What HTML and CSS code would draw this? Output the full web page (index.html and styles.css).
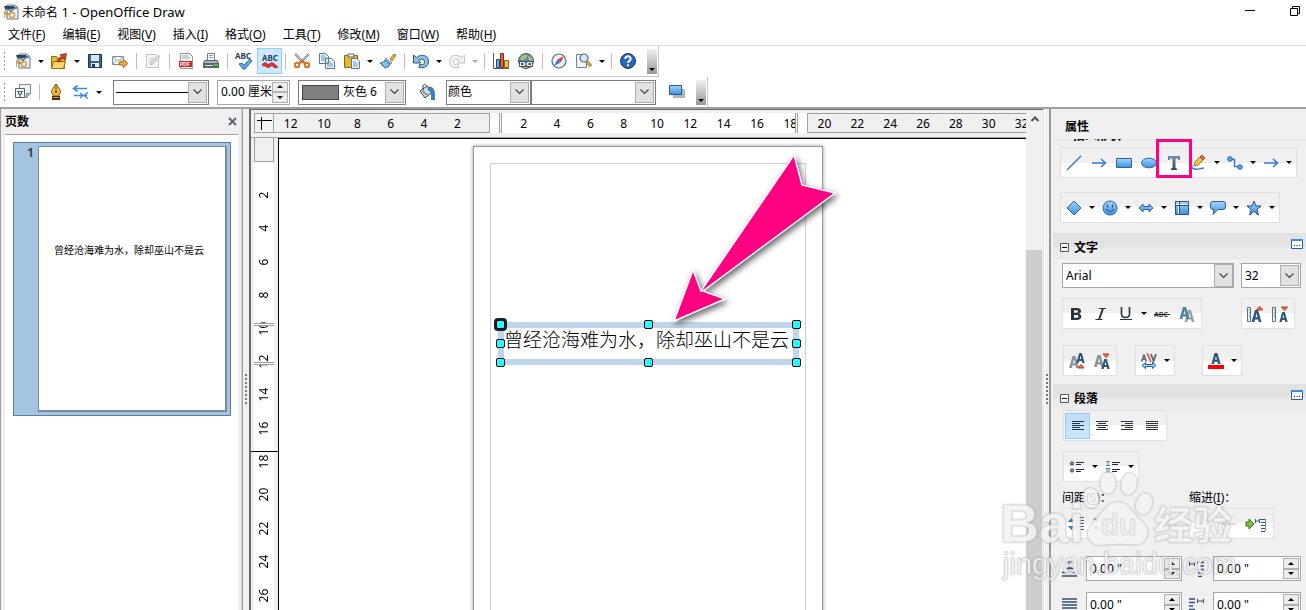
FILE: index.html
```html
<!DOCTYPE html>
<html lang="zh-CN">
<head>
<meta charset="utf-8">
<title>未命名 1 - OpenOffice Draw</title>
<link rel="stylesheet" href="styles.css">
</head>
<body>
<svg class="defs" aria-hidden="true">
  <defs>
    <linearGradient id="blue" x1="0" y1="0" x2="0" y2="1"><stop offset="0" stop-color="#a6d6f8"/><stop offset="1" stop-color="#3a8fe0"/></linearGradient>
    <linearGradient id="steel" x1="0" y1="0" x2="0" y2="1"><stop offset="0" stop-color="#6d8fa8"/><stop offset="1" stop-color="#274862"/></linearGradient>
    <symbol id="new" viewBox="0 0 16 16"><path d="M4 1h8l3 3v11H4z" fill="#e9f1f6" stroke="#5d7890"/><path d="M1 2h10l2 2-4 1-7 0z" fill="#27455e"/><path d="M2 6c3-2 5 0 6 2 1-3 3-4 6-4M2 10c2-1 4 0 5 1" fill="none" stroke="#5b7e9b" stroke-width="1.4"/><path d="M1 7h3v3H2v4H1z" fill="#e8a33a"/><circle cx="9" cy="11" r="2.6" fill="none" stroke="#e2a13b" stroke-width="1.5"/></symbol>
    <symbol id="open" viewBox="0 0 16 16"><path d="M.5 3.500h5l1 2h7v10H.5z" fill="#e8b530" stroke="#976a10"/><path d="M.5 15.500l2-7h12l-2 7z" fill="#ffd964" stroke="#976a10"/><path d="M6.500 9c0-4 2-5 4-5L9 1.500l6.500-1L14.500 7l-1.800-1.500C10 5.500 9 7 9 9z" fill="#c8442a" stroke="#7d2010" stroke-width=".6"/></symbol>
    <symbol id="save" viewBox="0 0 16 16"><path d="M1.500 1.500h13v13h-13z" fill="#33668c" stroke="#183a57"/><path d="M4 2h8v6H4z" fill="#d8e9f3"/><path d="M4 10h8v4H4z" fill="#e8eef2"/><path d="M5 11h3v3H5z" fill="#183a57"/></symbol>
    <symbol id="mail" viewBox="0 0 16 16"><path d="M.5 3.500h11v8H.5z" fill="#f3f7fa" stroke="#7b8b98"/><path d="M1 4l5 4 5-4M1 11l3-4M11 11L8 7" fill="none" stroke="#7b8b98" stroke-width=".8"/><path d="M7 9h4V6.500l5 4-5 4V12H7z" fill="#f4a83c" stroke="#9c5a0c" stroke-width=".8"/></symbol>
    <symbol id="edit" viewBox="0 0 16 16"><path d="M1.500 1.500h10l2 2v11h-12z" fill="#f6f6f6" stroke="#c4c4c4"/><path d="M4 5h6M4 7h4M4 9h3" stroke="#d0d0d0"/><path d="M5 12l1-3 7-7 2 2-7 7z" fill="#dcdcdc" stroke="#b8b8b8" stroke-width=".8"/></symbol>
    <symbol id="pdf" viewBox="0 0 16 16"><path d="M2.500.5h9l3 3v12h-12z" fill="#f4f7f9" stroke="#8899a5"/><path d="M4 3h6M4 5h8" stroke="#9aa9b4"/><path d="M1 8h13v6H1z" fill="#d92525"/><text x="2" y="13" font-family="Liberation Sans" font-size="5" font-weight="bold" fill="#fff">PDF</text></symbol>
    <symbol id="print" viewBox="0 0 16 16"><path d="M4.500.5h7v7h-7z" fill="#f4f7f9" stroke="#6f8291"/><path d="M6 2.500h4M6 4.500h4" stroke="#7fa2bd"/><path d="M1.500 7h13L16 10v5H0v-5z" fill="#59636c"/><path d="M2 8h12l1 2H1z" fill="#aab4bc"/><path d="M2 12.500h8" stroke="#dfe4e8"/><path d="M11 11h4v2h-4z" fill="#59c23c"/></symbol>
    <symbol id="spell" viewBox="0 0 18 18"><text x="0" y="7" font-family="Noto Sans" font-size="8" font-weight="bold" fill="#23405c">ABC</text><path d="M4 12l3-1 2 2 6-6 2 2-7 8H8z" fill="#5aa7e8" stroke="#1f5c9c" stroke-width=".8"/></symbol>
    <symbol id="auto" viewBox="0 0 18 18"><text x="1" y="9" font-family="Noto Sans" font-size="8" font-weight="bold" fill="#23405c">ABC</text><path d="M2 14q1.750-3.500 3.500-1t3.500 0 3.500 0 3.500 1" fill="none" stroke="#a31414" stroke-width="3.200"/><path d="M2 14q1.750-3.500 3.500-1t3.500 0 3.500 0 3.500 1" fill="none" stroke="#e8392e" stroke-width="1.800"/></symbol>
    <symbol id="cut" viewBox="0 0 16 16"><path d="M1 1l9 9M15 1l-9 9" stroke="#6d7f8e" stroke-width="2.200"/><path d="M1 1l9 9M15 1l-9 9" stroke="#dbe4ea" stroke-width=".8"/><ellipse cx="3" cy="12" rx="2.300" ry="2.300" fill="#fff" stroke="#d9731c" stroke-width="2"/><ellipse cx="13" cy="12" rx="2.300" ry="2.300" fill="#fff" stroke="#d9731c" stroke-width="2"/><path d="M5 10l3-2 3 2" fill="none" stroke="#d9731c" stroke-width="2.200"/></symbol>
    <symbol id="copy" viewBox="0 0 16 16"><path d="M.5.5h6l3 3v7h-9zM6.500 5.500h6l3 3v7h-9z" fill="#eaf3fa" stroke="#60788c"/><path d="M2 3h4M2 5h6M2 7h4M8 9h4M8 11h6M8 13h6" stroke="#5b9bd0"/></symbol>
    <symbol id="paste" viewBox="0 0 16 16"><path d="M.5 2.500h13v12H.5z" fill="#e8b530" stroke="#8b6313"/><path d="M4 1h6v3H4z" fill="#eaeff2" stroke="#5f6d78"/><path d="M7.500 5.500h5l3 3v7h-8z" fill="#eef5fa" stroke="#60788c"/><path d="M9 9h3M9 11h5M9 13h5" stroke="#5b9bd0"/></symbol>
    <symbol id="brush" viewBox="0 0 16 16"><path d="M10 6l4-5 2 1-4 6z" fill="#f2b640" stroke="#8d5d10" stroke-width=".8"/><path d="M6 5l6 5-2 1-5-4z" fill="#c9d3da" stroke="#60717e" stroke-width=".8"/><path d="M5 7l5 4c-1 3-3 4-5 4L0 10c2 0 4-1 5-3z" fill="#64aeec" stroke="#205c98" stroke-width=".8"/><path d="M3 10l4 3M5 9l3 3" stroke="#c4e3fa" stroke-width=".8"/></symbol>
    <symbol id="undo" viewBox="0 0 16 16"><path d="M.5 2v8H8L5.800 7.500C9 5 11.500 6.500 11.500 9s-2 3-5 2.500l-.5 3c6 1 9.500-1.500 9.500-6C15.500 2 8.500.5 3.500 4.500z" fill="#8fc0e2" stroke="#2a5b84"/></symbol>
    <symbol id="redo" viewBox="0 0 16 16"><path d="M15.500 2v8H8l2.200-2.500C7 5 4.500 6.500 4.500 9s2 3 5 2.500l.5 3C4 15.500.5 13 .5 8.500.5 2 7.500.5 12.500 4.500z" fill="#f2f2f2" stroke="#c4c4c4"/></symbol>
    <symbol id="chart" viewBox="0 0 16 16"><path d="M.5 0v15.500H16" fill="none" stroke="#4a5a68"/><path d="M3.500 6.500h3v8h-3z" fill="#6ab0e6" stroke="#1c4f80"/><path d="M7.500.5h3v14h-3z" fill="#e0663a" stroke="#862c10"/><path d="M11.500 7.500h4v7h-4z" fill="#f6c344" stroke="#8b6313"/></symbol>
    <symbol id="globe" viewBox="0 0 16 16"><circle cx="8" cy="8" r="7.500" fill="#4e93cf" stroke="#3b5b74"/><path d="M2 6c1-4 5-5 7-4l-1 3-3 2zM10 3l4 2 1 4-4-2zM5 13h5l-1 2H6z" fill="#c6c144"/><path d="M2.500 9.500h4v3h-4zM9.500 9.500h4v3h-4zM5 11h6" fill="none" stroke="#3b4b58" stroke-width="2.800"/><path d="M2.500 9.500h4v3h-4zM9.500 9.500h4v3h-4zM5 11h6" fill="none" stroke="#e6ebee" stroke-width="1.200"/></symbol>
    <symbol id="nav" viewBox="0 0 16 16"><circle cx="8" cy="8" r="7" fill="#e5f2fb" stroke="#526b80" stroke-width="1.200"/><path d="M13 3L9.500 9.500l-3-3z" fill="#e23b2e"/><path d="M3 13l3.500-6.500 3 3z" fill="#3576c6"/></symbol>
    <symbol id="zoom" viewBox="0 0 16 16"><path d="M.5 1.500h10v13H.5z" fill="#f4f7f9" stroke="#72869a"/><path d="M10 8l5 5" stroke="#8b5a10" stroke-width="3"/><path d="M10 8l5 5" stroke="#f2b640" stroke-width="1.500"/><circle cx="8" cy="5" r="4" fill="#cfe6f8" fill-opacity=".9" stroke="#5d7184" stroke-width="1.200"/></symbol>
    <symbol id="help" viewBox="0 0 16 16"><circle cx="8" cy="8" r="7.500" fill="#2964b8" stroke="#173c74"/><path d="M5.300 6C5.300 2.500 10.700 2.500 10.700 5.800 10.700 8 8 7.700 8 10" fill="none" stroke="#fff" stroke-width="2"/><path d="M7 11.300h2v2H7z" fill="#fff"/></symbol>
    <symbol id="styles" viewBox="0 0 16 16"><path d="M4.500.5h11v9l-4 4h-7z" fill="#eef2f5" stroke="#7b8b98"/><path d="M15.500 9.500h-4v4z" fill="#a8c8e0" stroke="#7b8b98"/><path d="M.5 4.500h9v9h-9z" fill="#fff" stroke="#4f6577"/><path d="M2 7.500h6M3.500 8v2h3V8M5 10v3" fill="none" stroke="#4f6577" stroke-width="1.200"/></symbol>
    <symbol id="pen" viewBox="0 0 16 16"><path d="M8 0c2 3 4.500 6 4.500 8l-2 4h-5l-2-4c0-2 2.500-5 4.500-8z" fill="#f7bd3f" stroke="#7a5210"/><path d="M8 1v7" stroke="#7a5210"/><circle cx="8" cy="8" r="1" fill="#4b3008"/><path d="M4 12h8v4H4z" fill="#4a3317"/><path d="M5 13.500h6" stroke="#d59b35"/></symbol>
    <symbol id="arrows" viewBox="0 0 18 16"><path d="M2 4.500h13M5.500 1.500l-4 3 4 3" fill="none" stroke="#3d8be0" stroke-width="1.600"/><path d="M2 11.500h13M8 9l3 2.500L8 14M16 8.500l-4 3 4 3" fill="none" stroke="#3d8be0" stroke-width="1.300"/></symbol>
    <symbol id="bucket" viewBox="0 0 16 16"><path d="M1 7l7-5 5 6-7 6z" fill="#d5dde2" stroke="#33444f"/><path d="M3.500 7l6 5" stroke="#8494a0" stroke-width="2"/><path d="M4 6V2c0-2 4-2 4 1" fill="none" stroke="#33444f"/><path d="M10 3c5 0 6 4 5.500 13h-3c0-6 .5-9-3.500-10z" fill="#3a83c8" stroke="#1d4f82" stroke-width=".6"/></symbol>
    <symbol id="shadow" viewBox="0 0 16 16"><path d="M4 5h12v9H4z" fill="#b3b3b3"/><path d="M.5 1.500h12v9H.5z" fill="url(#blue)" stroke="#2358a5"/></symbol>
    <symbol id="line" viewBox="0 0 16 16"><path d="M1 15L15 1" stroke="#2f7bd0" stroke-width="1.400"/></symbol>
    <symbol id="arrow" viewBox="0 0 16 16"><path d="M1 8h13M10 4l4.500 4L10 12" fill="none" stroke="#2f7bd0" stroke-width="1.500"/></symbol>
    <symbol id="rect" viewBox="0 0 16 16"><path d="M0.500 3.500h15v9h-15z" fill="url(#blue)" stroke="#2a62ad"/></symbol>
    <symbol id="ellipse" viewBox="0 0 16 16"><ellipse cx="8" cy="8" rx="7.500" ry="4.800" fill="url(#blue)" stroke="#2a62ad"/></symbol>
    <symbol id="text" viewBox="0 0 16 16"><path d="M2 1h12v4h-1.500L12 3.500H9.500v9.500l1.500.5V15H5v-1.500l1.500-.5V3.500H4L3.500 5H2z" fill="url(#steel)"/></symbol>
    <symbol id="pencil" viewBox="0 0 16 16"><path d="M1 10c-1 3 1 4 3 4 3 1 6-1 9-1" fill="none" stroke="#2f7bd0" stroke-width="1.500"/><path d="M3 11l1-4 6-6 3 3-6 6z" fill="#f7c23f" stroke="#8b6313" stroke-width=".8"/><path d="M9 2l2-2 3 3-2 2z" fill="#e06a5c" stroke="#8c2c20" stroke-width=".6"/></symbol>
    <symbol id="connector" viewBox="0 0 16 16"><path d="M4 4.500h3.500v7H13" fill="none" stroke="#2f7bd0" stroke-width="1.500"/><circle cx="3" cy="4" r="2.300" fill="#5aaaf0" stroke="#2a62ad"/><circle cx="13" cy="12" r="2.300" fill="#5aaaf0" stroke="#2a62ad"/></symbol>
    <symbol id="diamond" viewBox="0 0 16 16"><path d="M8 1l7 7-7 7-7-7z" fill="url(#blue)" stroke="#2a62ad"/></symbol>
    <symbol id="smile" viewBox="0 0 16 16"><circle cx="8" cy="8" r="7" fill="url(#blue)" stroke="#2a62ad"/><path d="M5.500 4.500v3M10.500 4.500v3M4 9q4 5 8 0" fill="none" stroke="#1d4f92" stroke-width="1.100"/></symbol>
    <symbol id="dblarrow" viewBox="0 0 16 16"><path d="M1 8l4-4v2.500h6V4l4 4-4 4V9.500H5V12z" fill="url(#blue)" stroke="#2a62ad"/></symbol>
    <symbol id="flow" viewBox="0 0 16 16"><path d="M1.500 1.500h13v13h-13z" fill="url(#blue)" stroke="#23529a"/><path d="M4.500 2v12M2 4.500h12" stroke="#fff"/><path d="M5.500 2v12M2 5.500h12" stroke="#23529a"/></symbol>
    <symbol id="callout" viewBox="0 0 16 16"><path d="M3 1.500h10q2.500 0 2.500 2.500v3q0 2.500-2.500 2.500H8L3 14.500 4 9.500H3Q.5 9.500.5 7V4Q.5 1.500 3 1.500z" fill="url(#blue)" stroke="#2a62ad"/></symbol>
    <symbol id="star" viewBox="0 0 16 16"><path d="M8 1l2 5h5l-4 3.500L12.500 15 8 11.500 3.500 15 5 9.500 1 6h5z" fill="url(#blue)" stroke="#23529a"/></symbol>
    <symbol id="bold" viewBox="0 0 16 16"><path d="M3 2h6c5 0 5 5 2 5.700C15 9 13.500 14 9 14H3zm3 2.200v2.500h2.500c2 0 2-2.500 0-2.500zm0 4.700v2.900h3c2 0 2-2.900 0-2.900z" fill="#29323f" fill-rule="evenodd"/></symbol>
    <symbol id="italic" viewBox="0 0 16 16"><path d="M6 2.500h7M2.500 13.500h7" stroke="#29323f" stroke-width="1.200"/><path d="M10 2.500L6 13.500" stroke="#29323f" stroke-width="2"/></symbol>
    <symbol id="underline" viewBox="0 0 16 16"><path d="M3.500 1v7q0 3.500 4 3.500t4-3.500V1" fill="none" stroke="#29323f" stroke-width="1.600"/><path d="M2 13.500h12" stroke="#29323f"/></symbol>
    <symbol id="strike" viewBox="0 0 16 16"><text x="0" y="11" font-family="Noto Sans" font-size="7" font-weight="bold" fill="#444">ABC</text><path d="M0 8.500h16" stroke="#222"/></symbol>
    <symbol id="a" viewBox="0 0 10 12"><path d="M0 12L3.500 0h3L10 12H7.200L6.600 9.500H3.400L2.800 12zM4 7.300h2L5 3z" fill-rule="evenodd"/></symbol>
    <symbol id="shadowA" viewBox="0 0 16 16"><use href="#a" x="5" y="4" width="11" height="12" fill="#9aa0a5"/><use href="#a" x="0" y="1" width="11" height="12" fill="#4681a8"/></symbol>
    <symbol id="grow" viewBox="0 0 16 16"><path d="M.5 1.500h3v14h-3zM2 4h2M2 7h2M2 10h2" fill="#e8f0f5" stroke="#56748a"/><use href="#a" x="4" y="4" width="11" height="12" fill="#2b567a"/><path d="M9.500 4L12.500.5 15.500 4z" fill="#f47b3a" stroke="#b73514"/></symbol>
    <symbol id="shrink" viewBox="0 0 16 16"><path d="M.5 1.500h3v14h-3zM2 4h2M2 7h2M2 10h2" fill="#e8f0f5" stroke="#56748a"/><use href="#a" x="7" y="6" width="9" height="10" fill="#2b567a"/><path d="M9.500 1L12.500 4.500 15.500 1z" fill="#f47b3a" stroke="#b73514"/></symbol>
    <symbol id="sup" viewBox="0 0 16 16"><use href="#a" x="0" y="3" width="10" height="12" fill="#8b9299"/><use href="#a" x="7" y="0" width="9" height="10" fill="#2b567a"/><path d="M9 15L12 11.500l3 3.500z" fill="#f47b3a" stroke="#b73514"/></symbol>
    <symbol id="sub" viewBox="0 0 16 16"><use href="#a" x="0" y="2" width="10" height="12" fill="#8b9299"/><use href="#a" x="7" y="6" width="9" height="10" fill="#2b567a"/><path d="M9 1L12 4.500l3-3.500z" fill="#f47b3a" stroke="#b73514"/></symbol>
    <symbol id="spacing" viewBox="0 0 16 16"><use href="#a" x="0" y="1" width="6" height="8" fill="#5a6570"/><path d="M10 1l2.500 7L15 1" fill="none" stroke="#5a6570" stroke-width="1.800"/><path d="M6 0l4 9" stroke="#e03030" stroke-width="1.300"/><path d="M1 12.500l3.500-3v2h7v-2l3.500 3-3.500 3v-2h-7v2z" fill="#9fd0f5" stroke="#225f9c"/></symbol>
    <symbol id="color" viewBox="0 0 16 16"><use href="#a" x="2" y="0" width="12" height="11" fill="#2b567a"/><path d="M0 12h16v4H0z" fill="#f00"/></symbol>
    <symbol id="left" viewBox="0 0 16 16"><path d="M2 3.500h12M2 5.500h8M2 7.500h12M2 9.500h8M2 11.500h12" stroke="#2c3440"/></symbol>
    <symbol id="center" viewBox="0 0 16 16"><path d="M2 3.500h12M4 5.500h8M2 7.500h12M4 9.500h8M2 11.500h12" stroke="#2c3440"/></symbol>
    <symbol id="right" viewBox="0 0 16 16"><path d="M2 3.500h12M6 5.500h8M2 7.500h12M6 9.500h8M2 11.500h12" stroke="#2c3440"/></symbol>
    <symbol id="justify" viewBox="0 0 16 16"><path d="M2 3.500h12M2 5.500h12M2 7.500h12M2 9.500h12M2 11.500h12" stroke="#2c3440"/></symbol>
    <symbol id="bullets" viewBox="0 0 16 16"><path d="M7 3.500h8M7 5.500h5M7 10.500h8M7 12.500h5" stroke="#222b36"/><circle cx="3" cy="4.500" r="1.600" fill="#6da4cc" stroke="#24435e"/><circle cx="3" cy="11.500" r="1.600" fill="#6da4cc" stroke="#24435e"/></symbol>
    <symbol id="numbers" viewBox="0 0 16 16"><path d="M7 3.500h8M7 5.500h6M7 10.500h8M7 12.500h5" stroke="#222b36"/><path d="M1 2.500h4M3 2.500v4M1 6.500h4M.5 9.500h5M2 9.500v4M4 9.500v4M.5 13.500h5" stroke="#5d87a3"/></symbol>
    <symbol id="inc" viewBox="0 0 16 16"><path d="M8 1.500h8M8 4.500h8M8 7.500h8M8 10.500h8M8 13.500h8" stroke="#59636d"/><path d="M0 6l3.500-4L7 6zM0 10l3.500 4L7 10z" fill="#3c74a6"/></symbol>
    <symbol id="dec" viewBox="0 0 16 16"><path d="M8 2.500h8M8 5.500h8M8 8.500h8M8 11.500h8M8 14.500h8" stroke="#414b55"/><path d="M0 2.500h7L3.500 6zM0 13h7L3.500 9.500z" fill="#3c74a6"/></symbol>
    <symbol id="outdent" viewBox="0 0 16 16"><path d="M16 8H3M7 4L3 8l4 4" fill="none" stroke="#b4b8bb"/></symbol>
    <symbol id="hang" viewBox="0 0 22 16"><path d="M1 6h3V3l5 5-5 5v-3H1z" fill="#7ec53c" stroke="#36751a"/><path d="M10.500 3v4M11 5h3M14.500 3v4" stroke="#2f5d8d"/><path d="M14 3.500h7M16 6.500h4M16 9.500h4M16 12.500h4M16 15.500h4" stroke="#2f5d8d"/><path d="M20.500 3v12" stroke="#6f8fb0"/></symbol>
    <symbol id="above" viewBox="0 0 16 16"><path d="M4 1h6M7 1v6M4 7h6" stroke="#47627f"/><path d="M3 7.500h8M0 11.500h15M0 15h15" stroke="#304e73" stroke-width="1.500"/></symbol>
    <symbol id="before" viewBox="0 0 16 16"><path d="M.5 1v4M0 3h5M5.500 1v4" stroke="#304e73"/><path d="M8 1.500h7M11 5h4M9 8.500h6M9 12h6M9 15.500h4" stroke="#304e73" stroke-width="1.300"/></symbol>
    <symbol id="below" viewBox="0 0 16 16"><path d="M0 2h15M0 5h15M0 8h15M0 11h15M5 14h6" stroke="#304e73" stroke-width="1.600"/></symbol>
    <symbol id="after" viewBox="0 0 16 16"><path d="M0 2h6M0 5.500h6M0 9h4M0 12.500h6" stroke="#304e73" stroke-width="1.300"/><path d="M8.500 2v4M9 4h5M14.500 2v4" stroke="#304e73"/></symbol>
    <symbol id="more" viewBox="0 0 12 12"><path d="M.5 1.500h11v9H.5z" fill="#fff" stroke="#2a5cb0"/><path d="M0 2h12" stroke="#3f86e8" stroke-width="2"/><path d="M3 7.500h1M5.500 7.500h1M8 7.500h1" stroke="#111"/></symbol>
    <symbol id="minus" viewBox="0 0 10 10"><path d="M.5.5h8v8h-8z" fill="#fff" stroke="#43596e"/><path d="M2 4.500h5" stroke="#111"/></symbol>
  </defs>
</svg>

<header class="titlebar">
  <svg class="i"><use href="#new"/></svg>
  <h1><span>未命名</span> 1 - OpenOffice Draw</h1>
  <div class="winbtns">
    <button aria-label="最小化"><svg class="win" viewBox="0 0 12 12"><path d="M1 4.500h10" stroke="#000"/></svg></button>
    <button aria-label="还原"><svg class="win" viewBox="0 0 12 12"><path d="M1.500 2.500h7v7h-7zM3.500 2V.5h7v7H9" fill="none" stroke="#000"/></svg></button>
  </div>
</header>

<nav class="menubar">
  <button>文件(<u>F</u>)</button><button>编辑(<u>E</u>)</button><button>视图(<u>V</u>)</button><button>插入(<u>I</u>)</button><button>格式(<u>O</u>)</button><button>工具(<u>T</u>)</button><button>修改(<u>M</u>)</button><button>窗口(<u>W</u>)</button><button>帮助(<u>H</u>)</button>
</nav>

<div class="toolbar standard">
  <span class="grip"></span>
  <button class="tb" aria-label="新建"><svg class="i"><use href="#new"/></svg></button><button class="dd" aria-label="新建选项"></button>
  <button class="tb" aria-label="打开"><svg class="i"><use href="#open"/></svg></button><button class="dd" aria-label="打开选项"></button>
  <button class="tb" aria-label="保存"><svg class="i"><use href="#save"/></svg></button>
  <button class="tb" aria-label="邮件"><svg class="i"><use href="#mail"/></svg></button>
  <span class="sep"></span>
  <button class="tb" aria-label="编辑文件"><svg class="i"><use href="#edit"/></svg></button>
  <span class="sep"></span>
  <button class="tb" aria-label="导出 PDF"><svg class="i"><use href="#pdf"/></svg></button>
  <button class="tb" aria-label="打印"><svg class="i"><use href="#print"/></svg></button>
  <span class="sep"></span>
  <button class="tb" aria-label="拼写检查"><svg class="i wide"><use href="#spell"/></svg></button>
  <button class="tb on" aria-label="自动拼写检查"><svg class="i wide"><use href="#auto"/></svg></button>
  <span class="sep"></span>
  <button class="tb" aria-label="剪切"><svg class="i"><use href="#cut"/></svg></button>
  <button class="tb" aria-label="复制"><svg class="i"><use href="#copy"/></svg></button>
  <button class="tb" aria-label="粘贴"><svg class="i"><use href="#paste"/></svg></button><button class="dd" aria-label="粘贴选项"></button>
  <button class="tb" aria-label="格式刷"><svg class="i"><use href="#brush"/></svg></button>
  <span class="sep"></span>
  <button class="tb" aria-label="撤消"><svg class="i"><use href="#undo"/></svg></button><button class="dd" aria-label="撤消选项"></button>
  <button class="tb" aria-label="恢复"><svg class="i"><use href="#redo"/></svg></button><button class="dd off" aria-label="恢复选项"></button>
  <span class="sep"></span>
  <button class="tb" aria-label="图表"><svg class="i"><use href="#chart"/></svg></button>
  <button class="tb" aria-label="超链接"><svg class="i"><use href="#globe"/></svg></button>
  <span class="sep"></span>
  <button class="tb" aria-label="导航"><svg class="i"><use href="#nav"/></svg></button>
  <button class="tb" aria-label="显示比例"><svg class="i"><use href="#zoom"/></svg></button><button class="dd" aria-label="显示比例选项"></button>
  <span class="sep"></span>
  <button class="tb" aria-label="帮助"><svg class="i"><use href="#help"/></svg></button>
  <button class="tail" aria-label="工具栏选项"></button>
</div>

<div class="toolbar props">
  <span class="grip"></span>
  <button class="tb" aria-label="样式"><svg class="i"><use href="#styles"/></svg></button>
  <span class="sep"></span>
  <button class="tb" aria-label="线条"><svg class="i"><use href="#pen"/></svg></button>
  <button class="tb" aria-label="箭头样式"><svg class="i wide"><use href="#arrows"/></svg></button><button class="dd" aria-label="箭头选项"></button>
  <span class="combo line-style"><select aria-label="线条样式"><option></option></select></span>
  <span class="spin line-width"><input type="text" value="0.00 厘米" aria-label="线宽"><span class="steps"><button aria-label="增加"></button><button aria-label="减少"></button></span></span>
  <span class="combo line-color"><span class="swatch"></span><select aria-label="线条颜色"><option>灰色 6</option></select></span>
  <button class="tb" aria-label="填充"><svg class="i"><use href="#bucket"/></svg></button>
  <span class="combos"><span class="combo fill-type"><select aria-label="填充类型"><option>颜色</option></select></span><span class="combo fill-value"><select aria-label="填充颜色"><option></option></select></span></span>
  <button class="tb" aria-label="阴影"><svg class="i"><use href="#shadow"/></svg></button>
  <button class="tail" aria-label="工具栏选项"></button>
</div>

<main class="work">
  <aside class="pages">
    <div class="pages-head"><h2>页数</h2><button class="close" aria-label="关闭"><svg viewBox="0 0 10 10"><path d="M1 1l7 7M8 1L1 8" stroke="#5b6673" stroke-width="2"/></svg></button></div>
    <div class="pages-list">
      <div class="thumb"><b>1</b><div class="thumb-page">曾经沧海难为水，除却巫山不是云</div></div>
    </div>
  </aside>
  <div class="splitter left"><i class="dots"></i></div>

  <section class="doc">
    <div class="hrow">
      <button class="origin" aria-label="标尺原点"></button>
      <div class="hruler">
        <div class="seg before"><span>12</span><span>10</span><span>8</span><span>6</span><span>4</span><span>2</span></div>
        <div class="seg inside"><span>2</span><span>4</span><span>6</span><span>8</span><span>10</span><span>12</span><span>14</span><span>16</span><span>18</span><i class="mark start"></i><i class="mark end"></i></div>
        <div class="seg behind"><span>20</span><span>22</span><span>24</span><span>26</span><span>28</span><span>30</span><span>32</span></div>
      </div>
    </div>
    <div class="vrow">
      <div class="vruler">
        <div class="vcap"></div>
        <div class="vnums"><span>2</span><span>4</span><span>6</span><span>8</span><span>10</span><span>12</span><span>14</span><span>16</span><span>18</span><span>20</span><span>22</span><span>24</span><span>26</span></div>
        <i class="mark top"></i><i class="mark bottom"></i><i class="cursor"></i>
      </div>
      <div class="canvas">
        <div class="sheet"><div class="margins"></div></div>
        <div class="textbox">曾经沧海难为水，除却巫山不是云
          <i class="h first nw"></i><i class="h n"></i><i class="h ne"></i><i class="h w"></i><i class="h e"></i><i class="h sw"></i><i class="h s"></i><i class="h se"></i>
        </div>
        <svg class="pointer" viewBox="0 0 180 190"><path d="M135 17L143 47 176 55 44 153 66 161 15 183 34 132 42 153z" fill="#ff0080" stroke="#fff" stroke-width="1.500"/></svg>
      </div>
    </div>
  </section>
  <div class="scroll"><button aria-label="向上滚动"><svg viewBox="0 0 10 8"><path d="M1.500 6L5 2.500 8.500 6" fill="none" stroke="#505050" stroke-width="2"/></svg></button><span class="track"></span><span class="bar"></span></div>
  <div class="splitter right"><i class="dots"></i></div>

  <aside class="side">
    <h2>属性</h2>
    <div class="cropped"><span>插入形状</span></div>
    <div class="stack shapes">
      <div class="box">
        <button class="tb" aria-label="直线"><svg class="i"><use href="#line"/></svg></button><button class="tb" aria-label="箭头"><svg class="i"><use href="#arrow"/></svg></button><button class="tb" aria-label="矩形"><svg class="i"><use href="#rect"/></svg></button><button class="tb" aria-label="椭圆"><svg class="i"><use href="#ellipse"/></svg></button><button class="tb target" aria-label="文字"><svg class="i"><use href="#text"/></svg></button><button class="tb" aria-label="曲线"><svg class="i"><use href="#pencil"/></svg></button><button class="dd" aria-label="曲线选项"></button><button class="tb" aria-label="连接符"><svg class="i"><use href="#connector"/></svg></button><button class="dd" aria-label="连接符选项"></button><button class="tb" aria-label="线条和箭头"><svg class="i"><use href="#arrow"/></svg></button><button class="dd" aria-label="箭头选项"></button>
      </div>
      <div class="box">
        <button class="tb" aria-label="基本形状"><svg class="i"><use href="#diamond"/></svg></button><button class="dd" aria-label="基本形状选项"></button><button class="tb" aria-label="符号形状"><svg class="i"><use href="#smile"/></svg></button><button class="dd" aria-label="符号选项"></button><button class="tb" aria-label="箭头总汇"><svg class="i"><use href="#dblarrow"/></svg></button><button class="dd" aria-label="箭头总汇选项"></button><button class="tb" aria-label="流程图"><svg class="i"><use href="#flow"/></svg></button><button class="dd" aria-label="流程图选项"></button><button class="tb" aria-label="图例"><svg class="i"><use href="#callout"/></svg></button><button class="dd" aria-label="图例选项"></button><button class="tb" aria-label="星形"><svg class="i"><use href="#star"/></svg></button><button class="dd" aria-label="星形选项"></button>
      </div>
    </div>
    <div class="sect"><svg class="minus"><use href="#minus"/></svg><h3>文字</h3><button aria-label="更多文字选项"><svg><use href="#more"/></svg></button></div>
    <div class="fonts"><span class="combo family"><select aria-label="字体"><option>Arial</option></select></span><span class="combo size"><select aria-label="字号"><option>32</option></select></span></div>
    <div class="textrow">
      <div class="box"><button class="tb" aria-label="粗体"><svg class="i"><use href="#bold"/></svg></button><button class="tb" aria-label="斜体"><svg class="i"><use href="#italic"/></svg></button><button class="tb" aria-label="下划线"><svg class="i"><use href="#underline"/></svg></button><button class="dd" aria-label="下划线选项"></button><button class="tb" aria-label="删除线"><svg class="i"><use href="#strike"/></svg></button><button class="tb" aria-label="阴影"><svg class="i"><use href="#shadowA"/></svg></button></div>
      <div class="box"><button class="tb" aria-label="放大"><svg class="i"><use href="#grow"/></svg></button><button class="tb" aria-label="缩小"><svg class="i"><use href="#shrink"/></svg></button></div>
    </div>
    <div class="textrow second">
      <div class="box"><button class="tb" aria-label="上标"><svg class="i"><use href="#sup"/></svg></button><button class="tb" aria-label="下标"><svg class="i"><use href="#sub"/></svg></button></div>
      <div class="box"><button class="tb" aria-label="字距"><svg class="i"><use href="#spacing"/></svg></button><button class="dd" aria-label="字距选项"></button></div>
      <div class="box"><button class="tb" aria-label="字体颜色"><svg class="i"><use href="#color"/></svg></button><button class="dd" aria-label="颜色选项"></button></div>
    </div>
    <div class="sect"><svg class="minus"><use href="#minus"/></svg><h3>段落</h3><button aria-label="更多段落选项"><svg><use href="#more"/></svg></button></div>
    <div class="stack para">
      <div class="box"><button class="tb on" aria-label="左对齐"><svg class="i"><use href="#left"/></svg></button><button class="tb" aria-label="居中"><svg class="i"><use href="#center"/></svg></button><button class="tb" aria-label="右对齐"><svg class="i"><use href="#right"/></svg></button><button class="tb" aria-label="两端对齐"><svg class="i"><use href="#justify"/></svg></button></div>
      <div class="box"><button class="tb" aria-label="项目符号"><svg class="i"><use href="#bullets"/></svg></button><button class="dd" aria-label="项目符号选项"></button><button class="tb" aria-label="编号"><svg class="i"><use href="#numbers"/></svg></button><button class="dd" aria-label="编号选项"></button></div>
    </div>
    <div class="indent">
      <div class="col">
        <p>间距(<u>S</u>)：</p>
        <div class="box"><button class="tb" aria-label="增大间距"><svg class="i"><use href="#inc"/></svg></button><button class="tb" aria-label="减小间距"><svg class="i"><use href="#dec"/></svg></button></div>
        <div class="field"><svg class="i"><use href="#above"/></svg><span class="spin"><input type="text" value="0.00 &quot;" aria-label="段前间距"><span class="steps"><button aria-label="增加"></button><button aria-label="减少"></button></span></span></div>
        <div class="field"><svg class="i"><use href="#below"/></svg><span class="spin"><input type="text" value="0.00 &quot;" aria-label="段后间距"><span class="steps"><button aria-label="增加"></button><button aria-label="减少"></button></span></span></div>
      </div>
      <div class="col">
        <p>缩进(<u>I</u>)：</p>
        <div class="box"><button class="tb" aria-label="增大缩进"></button><button class="tb" aria-label="减小缩进"><svg class="i"><use href="#outdent"/></svg></button><button class="tb long" aria-label="悬挂缩进"><svg class="i hang"><use href="#hang"/></svg></button></div>
        <div class="field"><svg class="i"><use href="#before"/></svg><span class="spin"><input type="text" value="0.00 &quot;" aria-label="左缩进"><span class="steps"><button aria-label="增加"></button><button aria-label="减少"></button></span></span></div>
        <div class="field"><svg class="i"><use href="#after"/></svg><span class="spin"><input type="text" value="0.00 &quot;" aria-label="右缩进"><span class="steps"><button aria-label="增加"></button><button aria-label="减少"></button></span></span></div>
      </div>
    </div>
  </aside>
</main>

<svg class="watermark" viewBox="0 0 246 140">
  <g class="wm">
    <text class="wm-logo" x="0" y="72">Bai</text>
    <ellipse cx="108" cy="13" rx="8" ry="11"/><ellipse cx="129" cy="14" rx="8" ry="11" transform="rotate(12 129 14)"/><ellipse cx="91" cy="28" rx="8" ry="10" transform="rotate(-15 91 28)"/><ellipse cx="144" cy="34" rx="8" ry="11" transform="rotate(20 144 34)"/>
    <path d="M118 32c10 0 13 9 19 15 10 8 14 15 8 23-6 7-13 4-27 4s-22 4-28-3c-6-8-1-15 8-24 6-6 9-15 20-15z"/>
    <text class="wm-cjk" x="154" y="69">经验</text>
    <text class="wm-url" x="3" y="104">jingyan.baidu.com</text>
  </g>
  <text class="wm-du" x="101" y="65">du</text>
</svg>
</body>
</html>
```
FILE: styles.css
```css
* { box-sizing: border-box; }
body {
  margin: 0;
  height: 100vh;
  display: flex;
  flex-direction: column;
  overflow: hidden;
  position: relative;
  background: #fff;
  color: #000;
  font: 12px/16px "Noto Sans", "Noto Sans CJK SC", sans-serif;
}
button, input, select { font: inherit; color: inherit; margin: 0; padding: 0; border: 0; background: none; border-radius: 0; }
h1, h2, h3, p { margin: 0; font-size: 12px; line-height: 16px; font-weight: normal; }
h2, h3 { font-weight: 600; }
.defs { position: absolute; width: 0; height: 0; }
.i { width: 16px; height: 16px; display: block; flex: none; }
.i.wide { width: 18px; height: 18px; }

.titlebar { flex: none; height: 24px; display: flex; align-items: center; padding-left: 3px; gap: 3px; }
.titlebar h1 { flex: 1; font-size: 13px; }
.titlebar h1 span { font-size: 12px; }
.winbtns { display: flex; gap: 33px; padding-right: 5px; }
.win { width: 12px; height: 12px; display: block; }

.menubar { flex: none; height: 22px; display: flex; gap: 17px; padding: 0 8px; align-items: center; border-bottom: 1px solid #dcdcdc; }
.menubar button { white-space: nowrap; }
u { text-underline-offset: 2px; }

.toolbar { flex: none; display: flex; align-items: center; align-self: flex-start; height: 31px; border: solid #c8c8c8; border-width: 0 1px 1px 0; }
.toolbar.props { border-bottom: 0; height: 30px; }
.grip { width: 3px; height: 18px; margin: 0 4px 0 3px; background: repeating-linear-gradient(#999 0 2px, transparent 2px 4px) center / 1px 100% no-repeat; }
.tb { width: 25px; height: 26px; flex: none; display: flex; align-items: center; justify-content: center; }
.tb.on { background: #cce8ff; border: 1px solid #90cdf8; }
.standard .tb.on { margin: 0 -1px 0 1px; }
.dd { width: 11px; height: 26px; flex: none; position: relative; }
.dd::after, .tail::after { content: ""; display: block; margin: auto; width: 0; height: 0; border: solid transparent; border-width: 3px 3px 0; border-top-color: #000; }
.dd.off::after { border-top-color: #aaa; }
.sep { width: 8px; height: 16px; flex: none; background: linear-gradient(#bdbdbd, #bdbdbd) center / 1px 100% no-repeat; }
.tail { width: 10px; height: 25px; margin: 0 1px 0 7px; background: linear-gradient(#f0f0f0, #999); padding-top: 16px; }

.combo { position: relative; display: flex; align-items: center; height: 25px; border: 1px solid #7a7f87; background: #fff; flex: none; }
.combo select { appearance: none; flex: 1; min-width: 0; height: 100%; padding: 0 20px 0 3px; outline: 0; }
.combo::after { content: ""; position: absolute; right: 1px; top: 1px; bottom: 1px; width: 17px; border: 1px solid #adadad; background: #e1e1e1 url("data:image/svg+xml,%3Csvg xmlns='http://www.w3.org/2000/svg' width='9' height='6'%3E%3Cpath d='M.5 .5L4.500 4.500 8.500 .5' fill='none' stroke='%23444' stroke-width='1.200'/%3E%3C/svg%3E") center no-repeat; pointer-events: none; }
.spin { display: flex; height: 25px; border: 1px solid #a5a7ab; background: #fff; padding: 1px; }
.spin input { flex: 1; width: 0; min-width: 0; padding-left: 2px; outline: 0; }
.steps { display: flex; flex-direction: column; width: 16px; flex: none; }
.steps button { flex: 1; border: 1px solid #b0b0b0; background: #ececec; display: grid; place-items: center; }
.steps button::after { content: ""; border: solid transparent; border-width: 0 3px 3px; border-bottom-color: #000; }
.steps button + button::after { border-width: 3px 3px 0; border-top-color: #000; }

.line-style { width: 96px; margin-left: 9px; }
.line-style::before { content: ""; position: absolute; left: 2px; right: 18px; top: 11px; border-top: 1px solid #000; }
.line-width { width: 73px; margin: 0 8px; }
.line-color { width: 108px; margin-right: 8px; }
.swatch { width: 37px; height: 15px; margin-left: 3px; background: #808080; border: 1px solid #444; }
.line-color select { padding-left: 4px; }
.combos { display: flex; margin: 0 8px 0 7px; }
.fill-type { width: 85px; }
.fill-type select { padding-left: 1px; }
.fill-value { width: 125px; }

.work { flex: 1; min-height: 0; display: flex; border-top: 2px solid #a0a0a0; background: #f0f0f0; }
.pages { width: 242px; flex: none; display: flex; flex-direction: column; padding: 0 3px 0 4px; border-left: 1px solid #a0a0a0; border-right: 1px solid #d0d0d0; }
.pages-head { height: 26px; padding-top: 1px; display: flex; align-items: center; justify-content: space-between; border-bottom: 1px solid #a0a0a0; }
.close { width: 10px; height: 10px; }
.close svg { display: block; }
.pages-list { flex: 1; background: #fff; padding: 7px 7px 0 8px; }
.thumb { height: 274px; display: flex; padding: 3px 3px 3px 13px; background: #a3c5e2; border: 1px solid #5a7fa0; }
.thumb b { width: 11px; line-height: 14px; color: #444; }
.thumb-page { flex: 1; background: #fff; border: 1px solid #7b8a98; border-width: 1px 2px 2px 1px; padding: 95px 6px 0 0; text-align: center; font-size: 10px; line-height: 16px; white-space: nowrap; }
.splitter { width: 7px; flex: none; border-left: 1px solid #a0a0a0; display: flex; align-items: center; justify-content: center; }
.splitter.right { width: 8px; border-left-color: #e0e0e0; border-right: 2px solid #999; box-shadow: inset 1px 0 #fff; }
.dots { width: 2px; height: 32px; margin-bottom: -60px; background: repeating-linear-gradient(#777 0 2px, transparent 2px 4px); }

.doc { flex: 1; min-width: 0; display: flex; flex-direction: column; border-left: 2px solid #696969; border-top: 1px solid #696969; }
.hrow { display: flex; height: 28px; padding: 3px 0 4px 3px; border-bottom: 1px solid #a0a0a0; flex: none; }
.origin { width: 20px; height: 20px; border: 1px solid #a0a0a0; background: linear-gradient(#000, #000) 2px 6px / 15px 1px no-repeat, linear-gradient(#000, #000) 6px 3px / 1px 13px no-repeat, #f4f4f4; }
.hruler { flex: 1; min-width: 0; display: flex; overflow: hidden; }
.seg { display: grid; align-items: center; text-align: center; flex: none; padding-top: 1px; }
.before { width: 216px; padding-right: 15px; grid-template-columns: repeat(6, 1fr); border: 1px solid #a0a0a0; border-left: 0; }
.inside { position: relative; width: 317px; padding: 1px 0 0 17px; grid-template-columns: repeat(9, 1fr); background: #fff; }
.behind { width: 232px; grid-template-columns: repeat(7, 1fr); border: 1px solid #a0a0a0; }
.mark { position: absolute; background: #fff; border: 0 solid #a0a0a0; }
.hruler .mark { top: 0; bottom: 0; width: 3px; border-width: 0 1px; }
.start { left: 9px; }
.end { left: 305px; }

.vrow { flex: 1; min-height: 0; display: flex; }
.vruler { position: relative; width: 27px; padding: 0 4px 0 3px; overflow: hidden; flex: none; }
.vcap { height: 24px; border: 1px solid #a0a0a0; border-top: 0; }
.vnums { height: 450px; padding-top: 16px; background: #fff; display: grid; grid-template-rows: repeat(13, 1fr); }
.vnums span { writing-mode: vertical-rl; transform: rotate(180deg); display: flex; align-items: center; justify-content: center; line-height: 20px; width: 20px; }
.vruler .mark { left: 3px; width: 20px; height: 3px; border-width: 1px 0; }
.top { top: 185px; }
.bottom { top: 224px; }
.cursor { position: absolute; left: 0; right: 0; top: 313px; height: 1px; background: #000; }
.canvas { position: relative; flex: 1; overflow: hidden; background: #fff; border: solid #000; border-width: 1px 0 0 1px; }
.sheet { position: absolute; left: 194px; top: 7px; bottom: -30px; width: 350px; padding: 16px; border: 1px solid #999; box-shadow: 0 0 4px #999; background: #fff; }
.margins { height: 100%; border: 1px solid #d0d0d0; }
.textbox { position: absolute; left: 219px; top: 183px; width: 301px; height: 43px; border: 6px solid #bfd5ec; font-size: 19px; font-weight: 300; line-height: 24px; white-space: nowrap; }
.h { position: absolute; width: 9px; height: 9px; background: #2ff; border: 1px solid #000; border-radius: 2px; }
.nw, .n, .ne { top: -8px; }
.w, .e { top: 11px; }
.sw, .s, .se { bottom: -8px; }
.nw, .w, .sw { left: -8px; }
.ne, .e, .se { right: -8px; }
.n, .s { left: 140px; }
.h.first { box-shadow: 0 0 0 2px #123; }
.pointer { position: absolute; left: 380px; top: -1px; width: 180px; height: 190px; filter: drop-shadow(2px 3px 3px rgba(0, 0, 0, .6)); }

.scroll { width: 17px; flex: none; display: flex; flex-direction: column; border-top: 1px solid #696969; }
.scroll button { height: 18px; display: grid; place-items: center; }
.scroll svg { width: 10px; height: 8px; }
.track { flex: 122; }
.bar { flex: 360; background: #cdcdcd; margin-right: 1px; }

.side { width: 255px; flex: none; padding-left: 2px; overflow: hidden; }
.side > h2 { padding: 10px 0 4px 12px; height: 30px; }
.cropped { height: 8px; background: linear-gradient(#ebebeb, #f0f0f0); padding-left: 20px; }
.cropped span { display: flex; height: 2px; overflow: hidden; align-items: flex-end; line-height: 11px; font-weight: 600; }
.stack { display: flex; flex-direction: column; align-items: flex-start; }
.box { display: flex; width: max-content; padding-right: 2px; border: 1px solid #e0e0e0; background: linear-gradient(#f0f0f0 50%, #fff 50%); height: 31px; align-items: center; }
.shapes { padding-left: 7px; gap: 14px; }
.target { position: relative; }
.target::after { content: ""; position: absolute; inset: -11px -6px -2px -5px; border: 3px solid #ff0080; }
.sect { height: 26px; margin-top: 10px; display: flex; align-items: center; gap: 4px; padding: 4px 3px 0 7px; background: linear-gradient(#e2e2e2 55%, #ebebeb 55%); }
.sect h3 { flex: 1; }
.sect .minus { width: 10px; height: 10px; }
.sect button { width: 12px; height: 12px; margin-bottom: 8px; }
.sect button svg { width: 12px; height: 12px; display: block; }
.fonts { display: flex; gap: 7px; padding: 4px 0 0 9px; }
.family { width: 172px; border-color: #a5a7ab; }
.family::after { right: 0; top: 0; bottom: 0; }
.size { width: 60px; border-color: #a5a7ab; }
.textrow { display: flex; gap: 39px; padding: 10px 0 0 9px; }
.second { padding: 16px 0 0 10px; gap: 18px; }
.second .box:last-child { margin-left: 9px; }
.second + .sect { margin-top: 8px; }
.para { padding-left: 10px; gap: 10px; }
.para .tb.on { margin: 0 -1px 0 1px; background: rgba(160, 210, 250, .6); }
.indent { display: flex; gap: 7px; padding: 8px 5px 0 9px; }
.col:first-child { width: 120px; }
.col:last-child { flex: 1; }
.col .box { margin: 2px 0 17px; }
.long { width: 31px; }
.hang { width: 22px; }
.field { display: flex; align-items: center; gap: 8px; margin-bottom: 11px; }
.field .spin { flex: 1; }

.watermark { position: absolute; right: 60px; bottom: 0; width: 246px; height: 140px; pointer-events: none; overflow: visible; }
.wm { fill: rgba(255, 255, 255, .8); stroke: rgba(200, 200, 200, .45); stroke-width: 1; filter: drop-shadow(0 0 1px rgba(120, 120, 120, .5)); }
.wm-logo { font: bold 54px "Liberation Sans", sans-serif; }
.wm-cjk { font: bold 39px "Noto Sans CJK SC", sans-serif; }
.wm-url { font: 29px "Liberation Sans", sans-serif; }
.wm-du { font: bold 29px "Liberation Sans", sans-serif; fill: #eee; stroke: #ddd; }
```
